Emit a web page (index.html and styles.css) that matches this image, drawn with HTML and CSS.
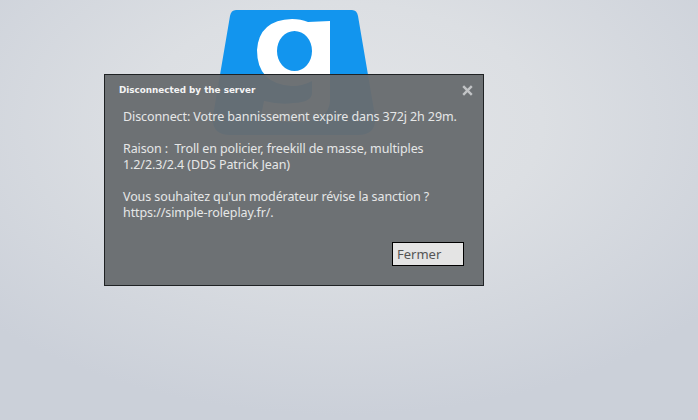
FILE: index.html
```html
<!DOCTYPE html>
<html lang="fr">
<head>
<meta charset="utf-8">
<title>Disconnected</title>
<link rel="stylesheet" href="styles.css">
</head>
<body>
<svg class="logo" width="200" height="140" viewBox="200 0 200 140">
  <path class="logo-tile" d="M236 10H352Q357 10 358 16L375 116Q377 135 358 135H230Q211 135 213 116L230 16Q231 10 236 10Z"/>
  <path class="logo-g" fill-rule="evenodd" d="M308 22L330 21V100Q330 122 294 122Q274 122 261 116L264 101Q280 105 294 103Q312 102 312 93V81Q303 86 292 86Q257 84 257 50Q259 20 292 19Q301 19 308 22ZM294.500 31A17.500 20 0 1 0 294.500 71A17.500 20 0 1 0 294.500 31Z"/>
</svg>
<section class="dialog">
  <header class="dialog-head">
    <h1 class="dialog-title">Disconnected by the server</h1>
    <span class="dialog-close">
      <svg width="11" height="11" viewBox="0 0 11 11"><path d="M1.2 1.2L9.8 9.8M9.8 1.2L1.2 9.8"/></svg>
    </span>
  </header>
  <p class="dialog-text">Disconnect: Votre bannissement expire dans 372j 2h 29m.

Raison :  Troll en policier, freekill de masse, multiples
1.2/2.3/2.4 (DDS Patrick Jean)

Vous souhaitez qu'un modérateur révise la sanction ?
https://simple-roleplay.fr/.</p>
  <footer class="dialog-foot">
    <button class="dialog-button">Fermer</button>
  </footer>
</section>
</body>
</html>
```
FILE: styles.css
```css
html, body { height: 100%; }
body {
  margin: 0;
  overflow: hidden;
  position: relative;
  background: radial-gradient(ellipse 480px 290px at 340px 125px, #e2e4e7 0%, #dcdfe3 42%, #cbd0d9 100%);
  background-color: #c7ccd5;
  font-family: "Noto Sans", sans-serif;
}
.logo { position: absolute; left: 200px; top: 0; }
.logo-tile { fill: #1295ee; }
.logo-g { fill: #ffffff; }
.dialog {
  position: absolute;
  left: 104px;
  top: 74px;
  width: 380px;
  height: 212px;
  box-sizing: border-box;
  border: 1px solid #1f2224;
  background: rgba(104, 108, 111, 0.96);
  display: flex;
  flex-direction: column;
  padding: 8px 19px 19px;
}
.dialog-head { display: flex; justify-content: space-between; align-items: center; height: 14px; margin-bottom: 12px; margin-right: -9px; margin-left: -5px; }
.dialog-title { margin: 0; font-size: 8.8px; font-weight: 700; color: #f4f4f4; font-family: "DejaVu Sans", sans-serif; }
.dialog-close { display: flex; }
.dialog-close path { stroke: #c2c4c6; stroke-width: 2.4; fill: none; }
.dialog-text {
  margin: 0 0 0 -1px;
  flex: 1;
  white-space: pre;
  font-size: 12.5px;
  letter-spacing: -0.1px;
  line-height: 16px;
  color: #e6e7e7;
}
.dialog-foot { display: flex; justify-content: flex-end; }
.dialog-button {
  width: 72px;
  height: 24px;
  box-sizing: border-box;
  border: 1px solid #000;
  background: #e4e4e4;
  color: #555;
  font: 13px "Noto Sans", sans-serif;
  text-align: left;
  padding: 0 4px 1px;
}
```
